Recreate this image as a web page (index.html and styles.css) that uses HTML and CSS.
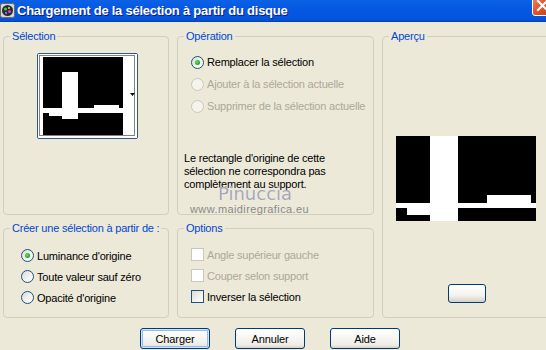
FILE: index.html
```html
<!DOCTYPE html>
<html lang="fr">
<head>
<meta charset="utf-8">
<title>Chargement de la sélection à partir du disque</title>
<link rel="stylesheet" href="styles.css">
</head>
<body>
<div class="window">
  <div class="titlebar">
    <span class="app-icon">
      <svg width="15" height="15" viewBox="0 0 15 15">
        <rect x="0.5" y="0.5" width="14" height="14" rx="2" fill="#d8d8d8" stroke="#6a6a6a"/>
        <circle cx="7.5" cy="7.5" r="5.5" fill="#2a2a2a"/>
        <circle cx="5.5" cy="6" r="1.6" fill="#3cc84a"/>
        <circle cx="9.5" cy="8.5" r="1.6" fill="#d040c0"/>
        <circle cx="6" cy="10" r="1.2" fill="#4a7cff"/>
        <circle cx="9" cy="5" r="1" fill="#ffd040"/>
      </svg>
    </span>
    <span class="title">Chargement de la sélection à partir du disque</span>
    <span class="close">
      <svg width="21" height="21" viewBox="0 0 21 21">
        <path d="M6 6 L15 15 M15 6 L6 15" stroke="#fff" stroke-width="2.2" stroke-linecap="square"/>
      </svg>
    </span>
  </div>

  <div class="groups">
    <fieldset class="group sel">
      <legend>Sélection</legend>
      <div class="thumb">
        <svg width="99" height="84" viewBox="0 0 99 84">
          <rect x="0" y="0" width="99" height="84" fill="#fff"/>
          <rect x="5" y="3" width="80" height="78" fill="#000"/>
          <rect x="24" y="18" width="16" height="47" fill="#fff"/>
          <rect x="5" y="54" width="80" height="5" fill="#fff"/>
          <rect x="56" y="51" width="25" height="3" fill="#fff"/>
          <rect x="11" y="59" width="13" height="3" fill="#fff"/>
          <rect x="1.5" y="1.5" width="95" height="80" fill="none" stroke="#000" stroke-dasharray="1 1"/>
          <path d="M92 39 L97 39 L94.5 42 Z" fill="#000"/>
        </svg>
      </div>
    </fieldset>

    <fieldset class="group op">
      <legend>Opération</legend>
      <div class="options-list op-list">
        <div class="option"><span class="radio checked"></span><span>Remplacer la sélection</span></div>
        <div class="option disabled"><span class="radio"></span><span>Ajouter à la sélection actuelle</span></div>
        <div class="option disabled"><span class="radio"></span><span>Supprimer de la sélection actuelle</span></div>
      </div>
      <div class="note">
        Le rectangle d'origine de cette<br>
        sélection ne correspondra pas<br>
        complètement au support.
        <span class="wm-name">Pinuccia</span>
        <span class="wm-url">www.maidiregrafica.eu</span>
      </div>
    </fieldset>

    <fieldset class="group preview">
      <legend>Aperçu</legend>
      <div class="preview-img">
        <svg width="140" height="85" viewBox="0 0 140 85">
          <rect x="0" y="0" width="140" height="85" fill="#000"/>
          <rect x="34" y="0" width="28" height="85" fill="#fff"/>
          <rect x="0" y="67" width="140" height="5" fill="#fff"/>
          <rect x="91" y="59" width="44" height="8" fill="#fff"/>
          <rect x="11" y="72" width="23" height="7" fill="#fff"/>
        </svg>
      </div>
      <span class="mini-btn"></span>
    </fieldset>

    <fieldset class="group create">
      <legend>Créer une sélection à partir de :</legend>
      <div class="options-list create-list">
        <div class="option"><span class="radio checked"></span><span>Luminance d'origine</span></div>
        <div class="option"><span class="radio"></span><span>Toute valeur sauf zéro</span></div>
        <div class="option"><span class="radio"></span><span>Opacité d'origine</span></div>
      </div>
    </fieldset>

    <fieldset class="group opts">
      <legend>Options</legend>
      <div class="options-list opts-list">
        <div class="option disabled"><span class="check"></span><span>Angle supérieur gauche</span></div>
        <div class="option disabled"><span class="check"></span><span>Couper selon support</span></div>
        <div class="option"><span class="check"></span><span>Inverser la sélection</span></div>
      </div>
    </fieldset>
  </div>

  <div class="buttons">
    <span class="btn default">Charger</span>
    <span class="btn">Annuler</span>
    <span class="btn">Aide</span>
  </div>
</div>
</body>
</html>
```

FILE: styles.css
```css
html, body {
  margin: 0;
  padding: 0;
}

body {
  width: 546px;
  height: 350px;
  overflow: hidden;
  background: #ECE9D8;
  font-family: "Liberation Sans", Arial, sans-serif;
  font-size: 11px;
  letter-spacing: -0.2px;
  color: #000;
}

.window {
  width: 546px;
  height: 350px;
  overflow: hidden;
}

/* Title bar */
.titlebar {
  height: 22px;
  display: flex;
  align-items: center;
  background: linear-gradient(to bottom, #0B62E6 0%, #0558E2 40%, #0355DE 85%, #0A4CC8 95%, #003CB0 100%);
  overflow: hidden;
}

.app-icon {
  flex: none;
  width: 15px;
  height: 15px;
  display: block;
  margin-top: -2px;
}

.app-icon svg {
  display: block;
}

.title {
  flex: 1;
  margin-left: 2px;
  margin-top: -2px;
  color: #fff;
  font-weight: bold;
  font-size: 13px;
  letter-spacing: -0.25px;
  white-space: nowrap;
  text-shadow: 1px 1px 0 #0A1E8A;
}

.close {
  flex: none;
  align-self: flex-start;
  width: 21px;
  height: 21px;
  margin-top: -5px;
  margin-right: -7px;
  box-sizing: border-box;
  border: 1px solid #fff;
  border-radius: 3px;
  background: linear-gradient(135deg, #F08A65 0%, #E1552F 45%, #C83D18 100%);
}

.close svg {
  display: block;
  margin: -1px;
}

/* Group boxes */
.groups {
  display: grid;
  grid-template-columns: 166px 197px 168px;
  grid-template-rows: 185px 96px;
  column-gap: 8px;
  row-gap: 7px;
  padding: 8px 0 0 3px;
}

.group {
  margin: 0;
  padding: 0;
  min-width: 0;
  border: 1px solid #D0D0BF;
  border-radius: 4px;
}

.group legend {
  margin-left: 6px;
  padding: 0 2px;
  color: #0046D5;
  line-height: 13px;
}

.sel { grid-column: 1; grid-row: 1; }
.op { grid-column: 2; grid-row: 1; }
.preview { grid-column: 3; grid-row: 1 / 3; }
.create { grid-column: 1; grid-row: 2; }
.opts { grid-column: 2; grid-row: 2; }

/* Selection thumbnail */
.thumb {
  width: 99px;
  height: 84px;
  margin: 10px 0 0 33px;
  border: 1px solid #2E5688;
  border-radius: 2px;
  overflow: hidden;
}

.thumb svg {
  display: block;
}

/* Option rows */
.options-list {
  display: flex;
  flex-direction: column;
}

.option {
  display: flex;
  align-items: center;
  gap: 3px;
  white-space: nowrap;
}

.option.disabled {
  color: #ACA899;
}

.op-list {
  margin-top: 8px;
}

.op-list .option {
  height: 22px;
  padding-left: 13px;
}

.create-list {
  margin-top: 10px;
}

.create-list .option {
  height: 21px;
  padding-left: 17px;
}

.opts-list {
  margin-top: 9px;
}

.opts-list .option {
  height: 21px;
  padding-left: 13px;
}

.radio {
  flex: none;
  width: 13px;
  height: 13px;
  box-sizing: border-box;
  border-radius: 50%;
  border: 1px solid #1C5180;
  background: linear-gradient(135deg, #DCDCD7 0%, #F4F4F0 60%, #fff 100%);
  display: grid;
  place-items: center;
}

.radio.checked::after {
  content: "";
  width: 5px;
  height: 5px;
  border-radius: 50%;
  background: radial-gradient(circle at 40% 40%, #6EE06E 0%, #2BB52B 50%, #168A16 100%);
}

.option.disabled .radio {
  border-color: #CAC8BB;
  background: #F5F4EC;
}

.check {
  flex: none;
  width: 13px;
  height: 13px;
  box-sizing: border-box;
  border: 1px solid #1C5180;
  background: linear-gradient(135deg, #DCDCD7 0%, #F2F2EE 60%, #fff 100%);
}

.option.disabled .check {
  border-color: #CAC8BB;
  background: #fff;
}

/* Note + watermark */
.note {
  position: relative;
  margin: 35px 0 0 6px;
  line-height: 13px;
}

.wm-name {
  position: absolute;
  left: 34px;
  top: 35px;
  font-family: "DejaVu Sans", sans-serif;
  font-size: 18px;
  line-height: 14px;
  letter-spacing: 0;
  color: #A6A6B8;
  text-shadow: 0 0 1px #fff;
}

.wm-url {
  position: absolute;
  left: 6px;
  top: 52px;
  font-size: 11px;
  line-height: 11px;
  letter-spacing: 0.4px;
  color: #8A8A8A;
  white-space: nowrap;
}

/* Preview */
.preview {
  display: flex;
  flex-direction: column;
  align-items: center;
}

.preview-img {
  margin-top: 93px;
  width: 140px;
  height: 85px;
}

.preview-img svg {
  display: block;
}

.mini-btn {
  display: block;
  margin-top: 63px;
  margin-left: 2px;
  width: 38px;
  height: 19px;
  box-sizing: border-box;
  border: 1px solid #003C74;
  border-radius: 3px;
  background: linear-gradient(to bottom, #fff 0%, #F4F3EE 60%, #D6D0C5 100%);
}

/* Dialog buttons */
.buttons {
  display: flex;
  gap: 25px;
  padding-left: 140px;
  margin-top: 10px;
}

.btn {
  width: 70px;
  height: 21px;
  box-sizing: border-box;
  border: 1px solid #003C74;
  border-radius: 3px;
  background: linear-gradient(to bottom, #fff 0%, #F5F4EF 55%, #ECEBE6 85%, #D6D0C5 100%);
  display: flex;
  align-items: center;
  justify-content: center;
  letter-spacing: -0.1px;
}

.btn.default {
  box-shadow: inset 0 0 0 1px #CEE7FF, inset 0 0 0 2px #98B8F0;
}
```
